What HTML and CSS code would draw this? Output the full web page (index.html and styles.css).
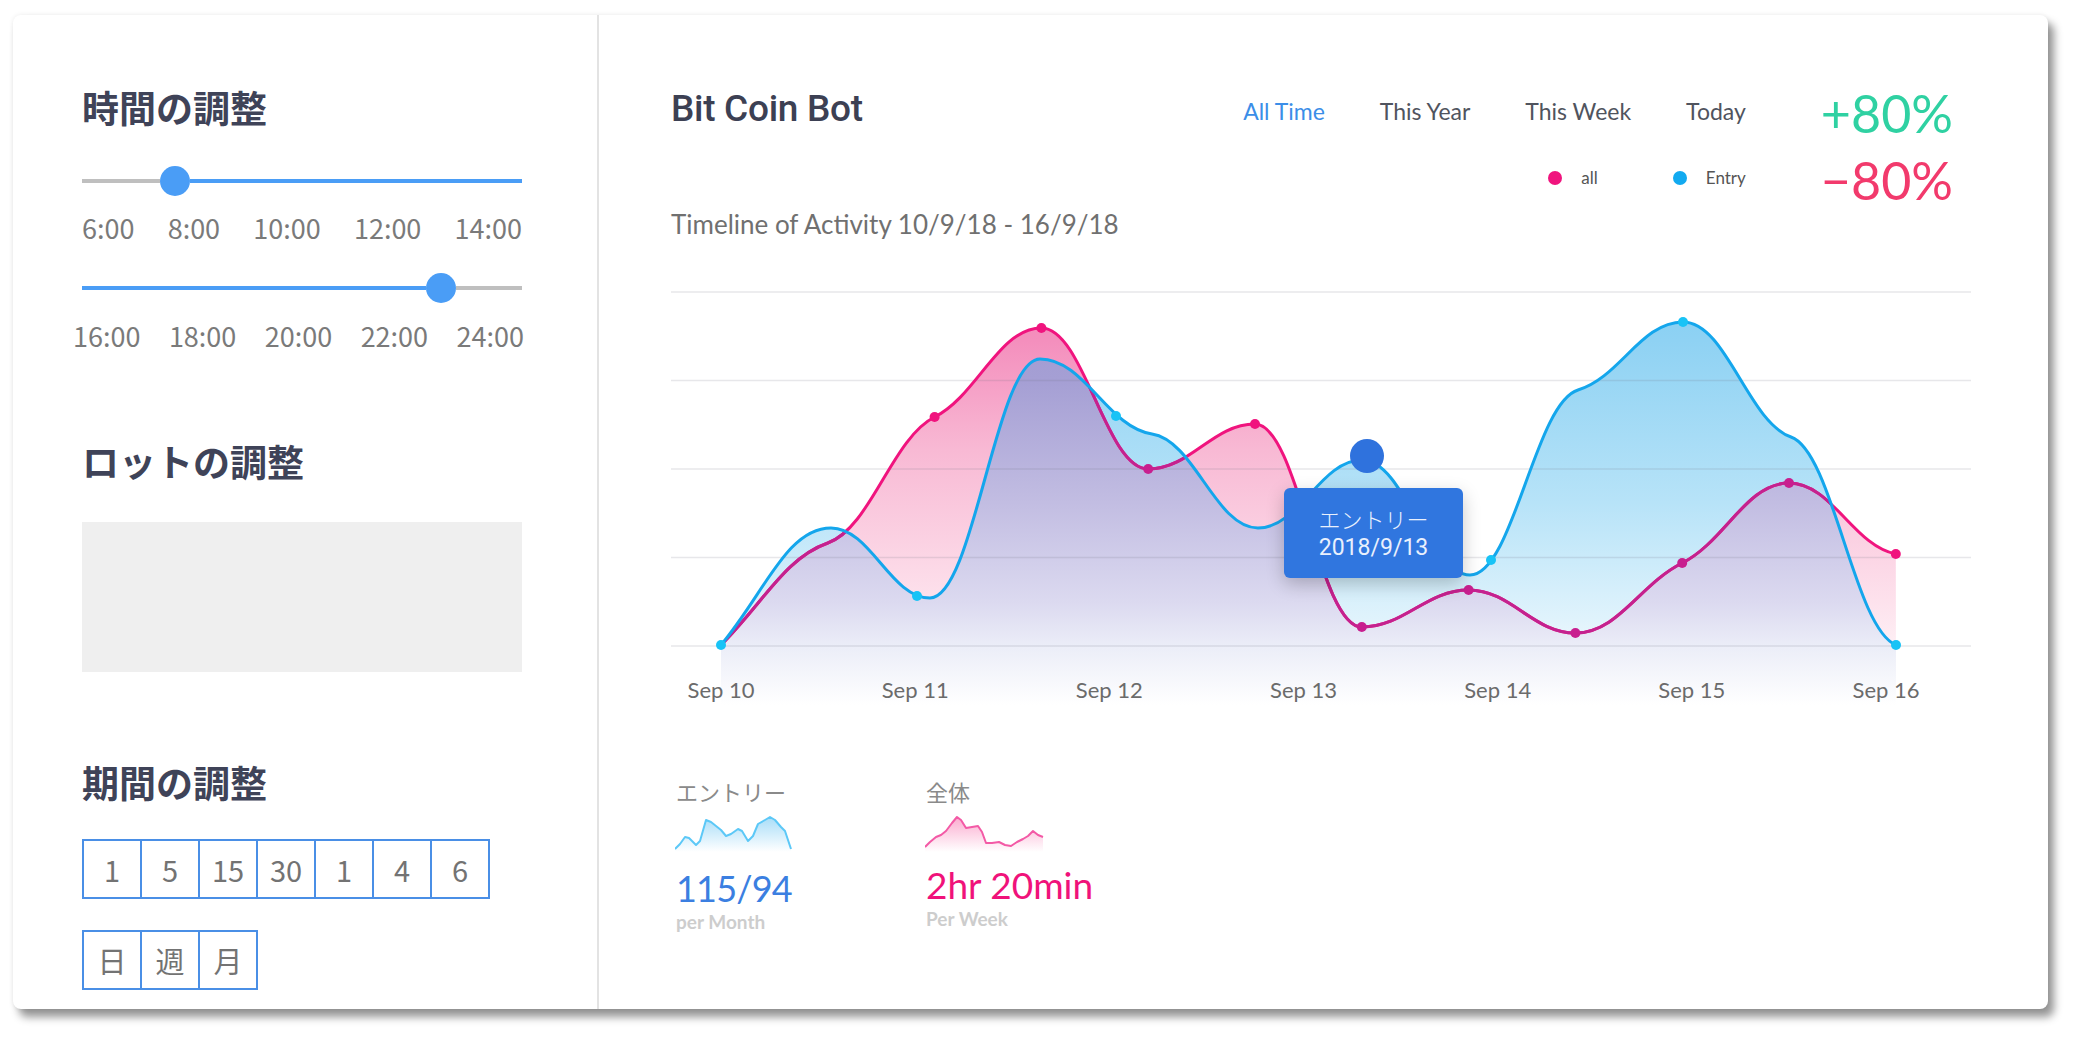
FILE: index.html
```html
<!DOCTYPE html>
<html lang="ja">
<head>
<meta charset="utf-8">
<title>Bit Coin Bot</title>
<link rel="stylesheet" href="styles.css">
</head>
<body>
<div class="card">
  <aside class="left">
    <h2 class="ltitle">時間の調整</h2>
    <div class="slider s1"><span class="trk grey"></span><span class="thumb"></span><span class="trk blue"></span></div>
    <div class="ticks"><span>6:00</span><span>8:00</span><span>10:00</span><span>12:00</span><span>14:00</span></div>
    <div class="slider s2"><span class="trk blue"></span><span class="thumb"></span><span class="trk grey"></span></div>
    <div class="ticks ticks2"><span>16:00</span><span>18:00</span><span>20:00</span><span>22:00</span><span>24:00</span></div>

    <h2 class="ltitle t2">ロットの調整</h2>
    <div class="lotbox"></div>

    <h2 class="ltitle t3">期間の調整</h2>
    <div class="btnrow"><span class="pbtn">1</span><span class="pbtn">5</span><span class="pbtn">15</span><span class="pbtn">30</span><span class="pbtn">1</span><span class="pbtn">4</span><span class="pbtn">6</span></div>
    <div class="btnrow r2"><span class="pbtn">日</span><span class="pbtn">週</span><span class="pbtn">月</span></div>
  </aside>

  <main class="right">
    <header class="rhead">
      <div class="rtitles">
        <h1 class="rtitle">Bit Coin Bot</h1>
        <p class="sub">Timeline of Activity 10/9/18 - 16/9/18</p>
      </div>
      <div class="rcontrols">
        <div class="tabcol">
          <nav class="tabs"><span class="active">All Time</span><span>This Year</span><span>This Week</span><span>Today</span></nav>
          <div class="legend">
            <span class="lg"><span class="dot pinkdot"></span>all</span>
            <span class="lg"><span class="dot bluedot"></span>Entry</span>
          </div>
        </div>
        <div class="pcts">
          <div class="up">+80%</div>
          <div class="down">−80%</div>
        </div>
      </div>
    </header>

    <div class="chart">
      <svg class="chart-svg" width="1300" height="450" viewBox="671 270 1300 450">
        <defs>
          <linearGradient id="gp" gradientUnits="userSpaceOnUse" x1="0" y1="300" x2="0" y2="705">
            <stop offset="0" stop-color="#f386b8"/>
            <stop offset="0.1" stop-color="#f48fbd"/>
            <stop offset="0.37" stop-color="#f8b9d4"/>
            <stop offset="0.74" stop-color="#fde1ec"/>
            <stop offset="0.86" stop-color="#fef0f5"/>
            <stop offset="1" stop-color="#ffffff"/>
          </linearGradient>
          <linearGradient id="gb" gradientUnits="userSpaceOnUse" x1="0" y1="300" x2="0" y2="705">
            <stop offset="0" stop-color="#86cff3"/>
            <stop offset="0.1" stop-color="#8fd2f3"/>
            <stop offset="0.5" stop-color="#b7e3f8"/>
            <stop offset="0.79" stop-color="#e0f3fc"/>
            <stop offset="0.86" stop-color="#eef8fd"/>
            <stop offset="1" stop-color="#ffffff"/>
          </linearGradient>
          <linearGradient id="gv" gradientUnits="userSpaceOnUse" x1="0" y1="300" x2="0" y2="705">
            <stop offset="0" stop-color="#9f99d1"/>
            <stop offset="0.2" stop-color="#a59fd4"/>
            <stop offset="0.5" stop-color="#c2bde2"/>
            <stop offset="0.75" stop-color="#dcdaf0"/>
            <stop offset="0.86" stop-color="#eceef8"/>
            <stop offset="1" stop-color="#ffffff"/>
          </linearGradient>
          <clipPath id="cb">
            <path d="M721,645 C765,592.2 787,528 831,528 C870.6,528 890.4,598 930,598 C974,598 996,359 1040,359 C1084.8,359 1107.2,427.3 1152,434 C1194.4,440.4 1215.6,528 1258,528 C1299.6,528 1320.4,460 1362,460 C1405.2,460 1426.8,575 1470,575 C1513.2,575 1534.8,403 1578,390 C1620,377.4 1641,322 1683,322 C1726.2,322 1747.8,421.9 1791,437 C1833,451.7 1854,628.2 1896,645 L1896,705 L721,705 Z"/>
          </clipPath>
        </defs>

        <path fill="url(#gb)" d="M721,645 C765,592.2 787,528 831,528 C870.6,528 890.4,598 930,598 C974,598 996,359 1040,359 C1084.8,359 1107.2,427.3 1152,434 C1194.4,440.4 1215.6,528 1258,528 C1299.6,528 1320.4,460 1362,460 C1405.2,460 1426.8,575 1470,575 C1513.2,575 1534.8,403 1578,390 C1620,377.4 1641,322 1683,322 C1726.2,322 1747.8,421.9 1791,437 C1833,451.7 1854,628.2 1896,645 L1896,705 L721,705 Z"/>
        <path fill="url(#gp)" d="M721,645 C763.7,602.3 785.1,557.9 827.8,543 C870.5,528.1 891.9,438.4 934.6,417 C977.3,395.6 998.7,328 1041.4,328 C1084.1,328 1105.5,469 1148.2,469 C1190.9,469 1212.3,424 1255,424 C1297.7,424 1319.1,627 1361.8,627 C1404.5,627 1425.9,590 1468.6,590 C1511.3,590 1532.7,633 1575.4,633 C1618.1,633 1639.5,584.4 1682.2,563 C1724.9,541.6 1746.3,483 1789,483 C1831.7,483 1853.1,545.5 1895.8,554 L1896,705 L721,705 Z"/>
        <path fill="url(#gv)" clip-path="url(#cb)" d="M721,645 C763.7,602.3 785.1,557.9 827.8,543 C870.5,528.1 891.9,438.4 934.6,417 C977.3,395.6 998.7,328 1041.4,328 C1084.1,328 1105.5,469 1148.2,469 C1190.9,469 1212.3,424 1255,424 C1297.7,424 1319.1,627 1361.8,627 C1404.5,627 1425.9,590 1468.6,590 C1511.3,590 1532.7,633 1575.4,633 C1618.1,633 1639.5,584.4 1682.2,563 C1724.9,541.6 1746.3,483 1789,483 C1831.7,483 1853.1,545.5 1895.8,554 L1896,705 L721,705 Z"/>

        <g class="grid">
          <line x1="671" y1="292" x2="1971" y2="292"/>
          <line x1="671" y1="380.5" x2="1971" y2="380.5"/>
          <line x1="671" y1="469" x2="1971" y2="469"/>
          <line x1="671" y1="557.5" x2="1971" y2="557.5"/>
          <line x1="671" y1="646" x2="1971" y2="646"/>
        </g>

        <path class="pline" d="M721,645 C763.7,602.3 785.1,557.9 827.8,543 C870.5,528.1 891.9,438.4 934.6,417 C977.3,395.6 998.7,328 1041.4,328 C1084.1,328 1105.5,469 1148.2,469 C1190.9,469 1212.3,424 1255,424 C1297.7,424 1319.1,627 1361.8,627 C1404.5,627 1425.9,590 1468.6,590 C1511.3,590 1532.7,633 1575.4,633 C1618.1,633 1639.5,584.4 1682.2,563 C1724.9,541.6 1746.3,483 1789,483 C1831.7,483 1853.1,545.5 1895.8,554"/>
        <path class="pline dark" clip-path="url(#cb)" d="M721,645 C763.7,602.3 785.1,557.9 827.8,543 C870.5,528.1 891.9,438.4 934.6,417 C977.3,395.6 998.7,328 1041.4,328 C1084.1,328 1105.5,469 1148.2,469 C1190.9,469 1212.3,424 1255,424 C1297.7,424 1319.1,627 1361.8,627 C1404.5,627 1425.9,590 1468.6,590 C1511.3,590 1532.7,633 1575.4,633 C1618.1,633 1639.5,584.4 1682.2,563 C1724.9,541.6 1746.3,483 1789,483 C1831.7,483 1853.1,545.5 1895.8,554"/>
        <path class="bline" d="M721,645 C765,592.2 787,528 831,528 C870.6,528 890.4,598 930,598 C974,598 996,359 1040,359 C1084.8,359 1107.2,427.3 1152,434 C1194.4,440.4 1215.6,528 1258,528 C1299.6,528 1320.4,460 1362,460 C1405.2,460 1426.8,575 1470,575 C1513.2,575 1534.8,403 1578,390 C1620,377.4 1641,322 1683,322 C1726.2,322 1747.8,421.9 1791,437 C1833,451.7 1854,628.2 1896,645"/>

        <g class="pdots">
          <circle cx="934.6" cy="417" r="5"/>
          <circle cx="1041.4" cy="328" r="5"/>
          <circle cx="1148.2" cy="469" r="5" class="in"/>
          <circle cx="1255" cy="424" r="5"/>
          <circle cx="1361.8" cy="627" r="5" class="in"/>
          <circle cx="1468.6" cy="590" r="5" class="in"/>
          <circle cx="1575.4" cy="633" r="5" class="in"/>
          <circle cx="1682.2" cy="563" r="5" class="in"/>
          <circle cx="1789" cy="483" r="5" class="in"/>
          <circle cx="1895.8" cy="554" r="5"/>
        </g>
        <g class="bdots">
          <circle cx="721" cy="645" r="5"/>
          <circle cx="917" cy="596" r="5"/>
          <circle cx="1116" cy="416" r="5"/>
          <circle cx="1491" cy="560" r="5"/>
          <circle cx="1683" cy="322" r="5"/>
          <circle cx="1896" cy="645" r="5"/>
        </g>
        <circle cx="1367" cy="456" r="17" class="bigdot"/>

        <g class="xl">
          <text x="721" y="698">Sep 10</text>
          <text x="915.2" y="698">Sep 11</text>
          <text x="1109.3" y="698">Sep 12</text>
          <text x="1303.5" y="698">Sep 13</text>
          <text x="1497.7" y="698">Sep 14</text>
          <text x="1691.8" y="698">Sep 15</text>
          <text x="1886" y="698">Sep 16</text>
        </g>
      </svg>
      <div class="tooltip">
        <div class="tt1">エントリー</div>
        <div class="tt2">2018/9/13</div>
      </div>
    </div>

    <section class="stats">
      <div class="stat">
        <div class="stat-label">エントリー</div>
        <svg class="spark" width="120" height="38" viewBox="0 0 120 38">
          <defs>
            <linearGradient id="sbg" x1="0" y1="0" x2="0" y2="1">
              <stop offset="0" stop-color="#a8ddf8"/>
              <stop offset="1" stop-color="#ffffff"/>
            </linearGradient>
          </defs>
          <polygon fill="url(#sbg)" points="0,35 5,30 10,23 14,24 21,31 25,27 31,6 36,8 41,12 46,16 51,22 56,20 63,15 67,17 73,27 78,22 83,10 90,6 95,3 100,6 106,13 110,17 116,35 116,38 0,38"/>
          <polyline class="sl-blue" points="0,35 5,30 10,23 14,24 21,31 25,27 31,6 36,8 41,12 46,16 51,22 56,20 63,15 67,17 73,27 78,22 83,10 90,6 95,3 100,6 106,13 110,17 116,35"/>
        </svg>
        <div class="stat-val blue">115/94</div>
        <div class="stat-sub">per Month</div>
      </div>
      <div class="stat">
        <div class="stat-label">全体</div>
        <svg class="spark" width="120" height="38" viewBox="0 0 120 38">
          <defs>
            <linearGradient id="spg" x1="0" y1="0" x2="0" y2="1">
              <stop offset="0" stop-color="#fbaccf"/>
              <stop offset="1" stop-color="#ffffff"/>
            </linearGradient>
          </defs>
          <polygon fill="url(#spg)" points="0,33 5,28 11,23 16,21 21,17 27,9 32,3 36,6 41,14 47,13 53,12 57,18 61,29 67,29 74,28 80,31 86,32 92,28 98,25 103,22 108,17 113,21 118,23 118,38 0,38"/>
          <polyline class="sl-pink" points="0,33 5,28 11,23 16,21 21,17 27,9 32,3 36,6 41,14 47,13 53,12 57,18 61,29 67,29 74,28 80,31 86,32 92,28 98,25 103,22 108,17 113,21 118,23"/>
        </svg>
        <div class="stat-val pink">2hr 20min</div>
        <div class="stat-sub">Per Week</div>
      </div>
    </section>
  </main>
</div>
</body>
</html>
```

FILE: styles.css
```css
* { box-sizing: border-box; margin: 0; padding: 0; }

body {
  margin: 0;
  background: #ffffff;
  width: 2077px;
  height: 1040px;
  overflow: hidden;
}

.card {
  margin: 15px 0 0 13px;
  width: 2035px;
  height: 994px;
  background: #ffffff;
  border-radius: 8px;
  box-shadow: 6px 8px 9px rgba(0, 0, 0, 0.42), 0 0 5px rgba(0, 0, 0, 0.08);
  display: flex;
}

/* ---------- left panel ---------- */
.left {
  width: 586px;
  flex: none;
  border-right: 2px solid #e3e3e3;
  padding: 70px 0 0 69px;
}

.ltitle {
  font: 700 37px/44px "Noto Sans CJK JP", sans-serif;
  color: #3f4358;
}
.t2 { margin-top: 86px; }
.t3 { margin-top: 88px; }

.slider {
  display: flex;
  align-items: center;
  width: 440px;
  height: 30px;
  margin-top: 37px;
}
.s2 { margin-top: 28px; }
.trk { height: 4px; display: block; }
.trk.grey { background: #bfbfbf; }
.trk.blue { background: #4a9df6; }
.s1 .grey { width: 78px; }
.s1 .blue { flex: 1; }
.s2 .blue { width: 344px; }
.s2 .grey { flex: 1; }
.thumb {
  flex: none;
  width: 30px;
  height: 30px;
  border-radius: 50%;
  background: #4a9df6;
}

.ticks {
  display: flex;
  justify-content: space-between;
  width: 440px;
  margin-top: 15px;
  font: 400 27px/34px "Noto Sans CJK JP", sans-serif;
  color: #7a7a7a;
}
.ticks2 { width: 451px; margin-left: -9px; margin-top: 16px; }

.lotbox {
  width: 440px;
  height: 150px;
  background: #efefef;
  margin-top: 39px;
}

.btnrow { display: flex; margin-top: 35px; }
.btnrow.r2 { margin-top: 31px; }
.pbtn {
  width: 60px;
  height: 60px;
  margin-right: -2px;
  border: 2px solid #4a8fe6;
  display: flex;
  align-items: center;
  justify-content: center;
  font: 400 29px/1 "Noto Sans CJK JP", sans-serif;
  color: #737373;
}

/* ---------- right panel ---------- */
.right {
  flex: 1;
  padding: 65px 76px 0 72px;
}

.rhead {
  display: flex;
  justify-content: space-between;
  align-items: flex-start;
}

.rtitle {
  margin-top: 7px;
  font: 500 37px/44px Roboto, "Liberation Sans", sans-serif;
  color: #3c4053;
  letter-spacing: -0.3px;
}

.sub {
  margin-top: 77px;
  font: 400 26px/32px Lato, sans-serif;
  color: #707070;
}

.rcontrols {
  display: flex;
  align-items: flex-start;
  margin-right: 19px;
}

.tabcol {
  margin-top: 16px;
  display: flex;
  flex-direction: column;
  align-items: flex-end;
}

.tabs {
  display: flex;
  gap: 55px;
  font: 400 23px/30px Lato, sans-serif;
  color: #50545e;
}
.tabs .active { color: #3b8ee8; }

.legend {
  margin-top: 40px;
  display: flex;
  align-items: center;
  font: 400 17px/24px Lato, sans-serif;
  color: #555555;
}
.lg { display: flex; align-items: center; gap: 19px; }
.lg + .lg { margin-left: 75px; }
.dot { width: 14px; height: 14px; border-radius: 50%; display: block; }
.pinkdot { background: #f0147e; }
.bluedot { background: #12aaf0; }

.pcts {
  margin-left: 75px;
  font: 400 52px/67px Lato, sans-serif;
}
.up { color: #2fd1a2; }
.down { color: #f23a6c; }

/* ---------- chart ---------- */
.chart {
  position: relative;
  margin-top: 30px;
  width: 1300px;
  height: 450px;
}
.chart-svg { display: block; }

.grid line { stroke: rgba(110, 110, 130, 0.17); stroke-width: 1.5; }

.pline { fill: none; stroke: #f0147e; stroke-width: 3; }
.pline.dark { stroke: #c4228f; }
.bline { fill: none; stroke: #14a6ec; stroke-width: 3; }

.pdots circle { fill: #f0147e; }
.pdots circle.in { fill: #c81f8f; }
.bdots circle { fill: #18c3f6; }
.bigdot { fill: #2f72dd; }

.xl text {
  font: 400 22px Lato, sans-serif;
  fill: #6b6b6b;
  text-anchor: middle;
}

.tooltip {
  position: absolute;
  left: 613px;
  top: 218px;
  width: 179px;
  height: 90px;
  padding-top: 15px;
  border-radius: 6px;
  background: #3076df;
  box-shadow: 0 6px 18px rgba(0, 0, 0, 0.22);
  text-align: center;
  color: #e9f0fd;
}
.tt1 { font: 300 22px/30px "Noto Sans CJK JP", sans-serif; }
.tt2 { font: 400 23px/30px Roboto, sans-serif; }

/* ---------- stats ---------- */
.stats {
  display: flex;
  margin-top: 56px;
  margin-left: 5px;
}
.stat { width: 250px; }
.stat-label {
  font: 400 22px/30px "Noto Sans CJK JP", sans-serif;
  color: #8a8a8a;
}
.spark { display: block; margin-top: 8px; margin-left: -1px; }
.sl-blue { fill: none; stroke: #5cc8f7; stroke-width: 2; stroke-linejoin: round; }
.sl-pink { fill: none; stroke: #f35aa6; stroke-width: 2; stroke-linejoin: round; }
.stat-val {
  margin-top: 17px;
  font: 400 37px/38px Lato, sans-serif;
}
.stat-val.blue { color: #3b7fe1; font-size: 36px; letter-spacing: -0.8px; }
.stat-val.pink { color: #f0127a; margin-top: 14px; }
.stat-sub {
  margin-top: 5px;
  font: 700 19px/20px Lato, sans-serif;
  color: #cdcdcd;
}
```
